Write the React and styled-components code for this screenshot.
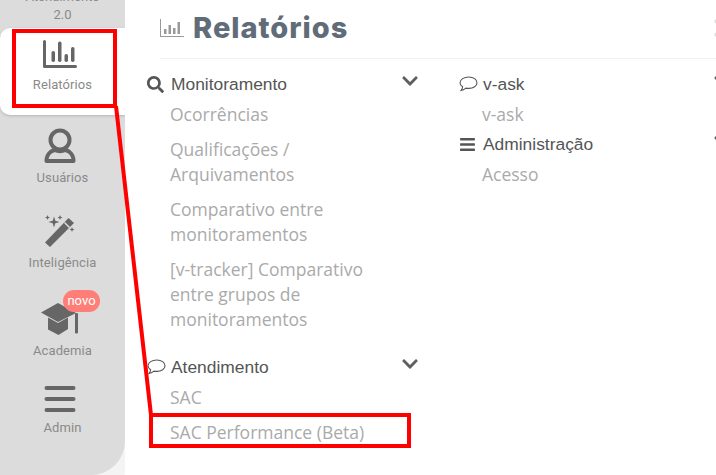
import React from 'react';
import styled, { createGlobalStyle } from 'styled-components';
import { FaChevronDown, FaSearch, FaBars, FaTimes } from 'react-icons/fa';

const sideItems = [
  { label: 'Relatórios', icon: 'reports', height: 87, top: 12, gap: 7, active: true },
  { label: 'Usuários', icon: 'user', height: 85, top: 13, gap: 7 },
  { label: 'Inteligência', icon: 'wand', height: 85, top: 14, gap: 7 },
  { label: 'Academia', icon: 'cap', height: 88, top: 18, gap: 7, badge: 'novo' },
  { label: 'Admin', icon: 'menu', height: 77, top: 13, gap: 8 },
];

const columns = [
  [
    {
      title: 'Monitoramento',
      icon: 'search',
      items: [
        'Ocorrências',
        'Qualificações / Arquivamentos',
        'Comparativo entre monitoramentos',
        '[v-tracker] Comparativo entre grupos de monitoramentos',
      ],
    },
    { title: 'Atendimento', icon: 'bubble', items: ['SAC', 'SAC Performance (Beta)'] },
  ],
  [
    { title: 'v-ask', icon: 'bubble', items: ['v-ask'] },
    { title: 'Administração', icon: 'bars', items: ['Acesso'] },
  ],
];

const SideIcon = ({ name }) => {
  if (name === 'reports') {
    return (
      <svg width="34" height="30" viewBox="0 0 34 30" fill="#666">
        <path d="M0 1.5a1.5 1.5 0 0 1 3 0V25h29.5a1.5 1.5 0 0 1 0 3H1.5A1.5 1.5 0 0 1 0 26.5z" />
        <rect x="8.500" y="11" width="3.500" height="11" rx="1.700" />
        <rect x="15" y="1.500" width="3.500" height="20.500" rx="1.700" />
        <rect x="21.500" y="14" width="3.500" height="8" rx="1.700" />
        <rect x="28" y="7" width="3.500" height="15" rx="1.700" />
      </svg>
    );
  }
  if (name === 'user') {
    return (
      <svg width="32" height="35" viewBox="0 0 32 35" fill="none" stroke="#666">
        <circle cx="16" cy="12" r="9.500" strokeWidth="4" />
        <path d="M2.500 33c0-6.500 4-10 8-11 3.500 1.500 7.500 1.500 11 0 4 1 8 4.500 8 11z" strokeWidth="4" strokeLinejoin="round" />
      </svg>
    );
  }
  if (name === 'wand') {
    return (
      <svg width="34" height="34" viewBox="0 0 34 34" fill="#666">
        <path d="M2 28.500 25.500 4 31 9 7 33z" />
        <path d="M21.500 8.500 26.500 13.500" stroke="#dcdcdc" strokeWidth="1.500" />
        <path d="M11 2.500l1.300 4.200 4.200 1.300-4.200 1.300L11 13.500 9.700 9.300 5.500 8l4.200-1.300zM4.500 1l.7 1.800L7 3.500l-1.800.7L4.500 6l-.7-1.800L2 3.500l1.800-.7zM17 1l.7 1.800 1.800.7-1.800.7L17 6l-.7-1.800-1.800-.7 1.800-.7zM29 13l.7 1.800 1.800.7-1.800.7L29 18l-.7-1.800-1.800-.7 1.800-.7z" />
      </svg>
    );
  }
  if (name === 'cap') {
    return (
      <svg width="38" height="33" viewBox="0 0 38 33" fill="#666">
        <path d="M0 9.500 17 0l18 10-18 9z" />
        <path d="M7 14.500 17 20l10-5.500V26l-9.500 6L7 26.500z" />
        <rect x="34" y="10" width="3" height="20.500" rx="1.200" />
      </svg>
    );
  }
  return (
    <svg width="32" height="26" viewBox="0 0 32 26" fill="#666">
      <rect x="0.500" y="0" width="31" height="4" rx="2" />
      <rect x="0.500" y="11" width="31" height="4" rx="2" />
      <rect x="0.500" y="22" width="31" height="4" rx="2" />
    </svg>
  );
};

const Bubble = () => (
  <svg width="19" height="16" viewBox="0 0 19 16" fill="none" stroke="#555" strokeWidth="1.100">
    <path d="M9.800 1C5 1 1 3.400 1 6.700c0 1.700 1 3.100 2.600 4.100-.2 1.400-.9 2.900-1.600 3.700 1.800-.3 3.700-1.400 4.900-2.400.9.200 1.900.3 2.900.3 4.700 0 8.200-2.500 8.200-5.700S14.500 1 9.800 1z" />
  </svg>
);

const GroupIcon = ({ name }) => {
  if (name === 'search') return <FaSearch size={17} color="#555" />;
  if (name === 'bars') return <FaBars size={17} color="#555" />;
  return <Bubble />;
};

const App = () => (
  <Page>
    <GlobalStyle />
    <Sidebar>
      <Brand>
        Atendimento
        <br />
        2.0
      </Brand>
      {sideItems.map((item) => (
        <SideItem key={item.label} $active={item.active} $height={item.height} $top={item.top}>
          <SideIconBox>
            <SideIcon name={item.icon} />
            {item.badge && <Badge>{item.badge}</Badge>}
          </SideIconBox>
          <SideLabel $gap={item.gap}>{item.label}</SideLabel>
        </SideItem>
      ))}
    </Sidebar>
    <Main>
      <TitleRow>
        <svg width="24" height="18" viewBox="0 0 24 18" fill="#999">
          <path d="M0 0h1v17h23v1H0z" />
          <rect x="4" y="10" width="2.500" height="5" />
          <rect x="8.500" y="6" width="2.500" height="9" />
          <rect x="13" y="9" width="2.500" height="6" />
          <rect x="17.500" y="3" width="2.500" height="12" />
        </svg>
        <Title>Relatórios</Title>
        <Close>
          <FaTimes size={28} />
        </Close>
      </TitleRow>
      <Columns>
        {columns.map((groups) => (
          <Column key={groups[0].title}>
            {groups.map((group) => (
              <Group key={group.title}>
                <GroupHeader>
                  <IconSlot>
                    <GroupIcon name={group.icon} />
                  </IconSlot>
                  <GroupTitle>{group.title}</GroupTitle>
                  <Chevron>
                    <FaChevronDown size={18} />
                  </Chevron>
                </GroupHeader>
                {group.items.map((text) => (
                  <SubItem key={text}>{text}</SubItem>
                ))}
              </Group>
            ))}
          </Column>
        ))}
      </Columns>
    </Main>
    <Callout $left={12} $top={29} $width={105} $height={79} />
    <Callout $left={149} $top={413} $width={262} $height={35} />
    <Connector width="716" height="475" viewBox="0 0 716 475">
      <line x1="116" y1="106" x2="151" y2="415" stroke="#f00" strokeWidth="4" />
    </Connector>
  </Page>
);

export default App;

const GlobalStyle = createGlobalStyle`
  html, body {
    margin: 0;
    padding: 0;
    background: #fff;
  }
`;

const Page = styled.div`
  position: relative;
  display: flex;
  width: 716px;
  height: 475px;
  overflow: hidden;
  background: #fff;
  font-family: "Roboto", "Liberation Sans", sans-serif;
`;

const Sidebar = styled.nav`
  flex: 0 0 125px;
  height: 475px;
  background: #dcdcdc;
  border-bottom-right-radius: 34px;
  box-shadow: 0 30px 0 0 #f4f4f4;
  overflow: hidden;
`;

const Brand = styled.div`
  margin-top: -12px;
  height: 40px;
  font-size: 13px;
  line-height: 18px;
  text-align: center;
  color: #8a8a8a;
`;

const SideItem = styled.div`
  display: flex;
  flex-direction: column;
  align-items: center;
  box-sizing: border-box;
  height: ${(props) => props.$height}px;
  padding-top: ${(props) => props.$top}px;
  background: ${(props) => (props.$active ? '#fff' : 'transparent')};
  border-radius: ${(props) => (props.$active ? '10px 0 0 10px' : '0')};
  box-shadow: ${(props) => (props.$active ? '0 1px 3px rgba(0, 0, 0, 0.18)' : 'none')};
`;

const SideIconBox = styled.div`
  position: relative;
  display: flex;
  justify-content: center;
  margin-right: 5px;
  line-height: 0;
`;

const Badge = styled.span`
  position: absolute;
  top: -13px;
  left: 22px;
  width: 37px;
  height: 22px;
  border-radius: 11px;
  background: #ff7f78;
  color: #fff;
  font-size: 13px;
  line-height: 21px;
  text-align: center;
`;

const SideLabel = styled.div`
  margin-top: ${(props) => props.$gap}px;
  font-size: 13px;
  line-height: 15px;
  letter-spacing: 0.1px;
  color: #8a8a8a;
`;

const Main = styled.main`
  flex: 1;
  min-width: 0;
`;

const TitleRow = styled.header`
  display: flex;
  align-items: center;
  gap: 9px;
  box-sizing: border-box;
  width: 574px;
  height: 59px;
  margin-left: 35px;
  padding-bottom: 3px;
  border-bottom: 1px solid #f1f1f1;
`;

const Title = styled.h1`
  margin: 0;
  font-family: "Inter", "Liberation Sans", sans-serif;
  font-size: 29px;
  font-weight: 800;
  letter-spacing: 1px;
  color: #606c78;
`;

const Close = styled.span`
  margin-left: auto;
  width: 24px;
  line-height: 0;
  color: #dcdcdc;
`;

const Columns = styled.div`
  display: grid;
  grid-template-columns: 271px 271px;
  gap: 41px;
  margin: 12px 0 0 22px;
`;

const Column = styled.div`
  display: flex;
  flex-direction: column;
`;

const Group = styled.section`
  margin-bottom: 17px;

  ${Column}:last-child & {
    margin-bottom: -1px;
  }
`;

const GroupHeader = styled.div`
  display: flex;
  align-items: center;
  height: 26px;
  color: #4f4f4f;
`;

const IconSlot = styled.span`
  display: flex;
  flex: 0 0 24px;
  align-items: center;
`;

const GroupTitle = styled.span`
  font-family: "Liberation Sans", Arial, sans-serif;
  font-size: 17.4px;
  color: #555;
`;

const Chevron = styled.span`
  margin-left: auto;
  margin-right: -1px;
  margin-top: -6px;
  line-height: 0;
  color: #5f5f5f;
`;

const SubItem = styled.div`
  box-sizing: border-box;
  width: 215px;
  margin-left: 23px;
  padding: 5px 0;
  font-family: "Open Sans", "Liberation Sans", sans-serif;
  font-size: 17.5px;
  line-height: 25px;
  color: #aaa;
`;

const Callout = styled.div`
  position: absolute;
  left: ${(props) => props.$left}px;
  top: ${(props) => props.$top}px;
  width: ${(props) => props.$width}px;
  height: ${(props) => props.$height}px;
  box-sizing: border-box;
  border: 4px solid #f00;
`;

const Connector = styled.svg`
  position: absolute;
  left: 0;
  top: 0;
  pointer-events: none;
`;
